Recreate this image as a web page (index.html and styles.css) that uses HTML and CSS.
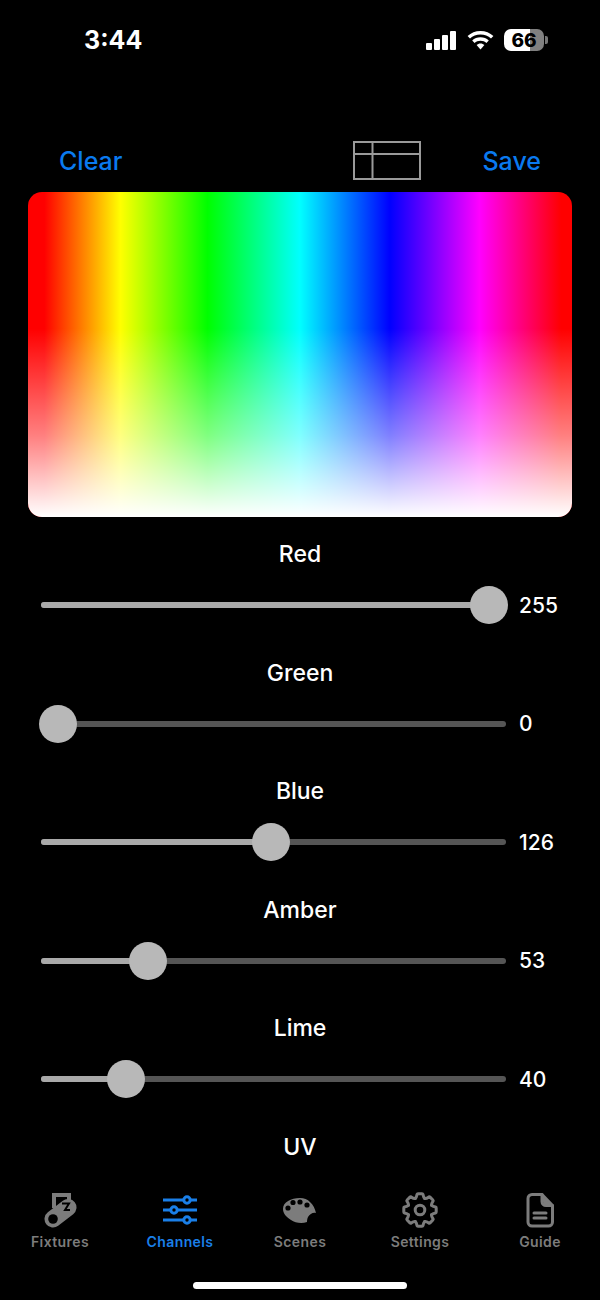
FILE: index.html
```html
<!DOCTYPE html>
<html lang="en">
<head>
  <meta charset="UTF-8">
  <title>Channels</title>
  <link rel="stylesheet" href="styles.css">
</head>
<body>
  <div class="app">
    <div class="status">
      <span class="time">3:44</span>
      <div class="status-icons">
        <svg class="signal" width="31" height="19" viewBox="0 0 31 19"><rect x="0" y="12" width="6" height="7" rx="1"/><rect x="8" y="8" width="6" height="11" rx="1"/><rect x="16" y="4" width="6" height="15" rx="1"/><rect x="24" y="0" width="6" height="19" rx="1"/></svg>
        <svg class="wifi" width="27" height="19" viewBox="0 0 27 19"><path d="M13.500 0C8.500 0 4 1.900.6 5l2.400 2.600C5.800 5.100 9.400 3.600 13.500 3.600s7.700 1.500 10.500 4L26.400 5C23 1.900 18.500 0 13.500 0z"/><path d="M13.500 6.200c-3.200 0-6.100 1.200-8.300 3.200l2.400 2.600c1.500-1.400 3.600-2.200 5.900-2.200s4.400.8 5.900 2.200l2.400-2.600c-2.200-2-5.100-3.200-8.300-3.200z"/><path d="M13.500 12.400c-1.500 0-2.900.6-3.900 1.500l3.900 4.600 3.900-4.600c-1-.9-2.400-1.500-3.900-1.500z"/></svg>
        <div class="battery">
          <div class="battery-body"><span>66</span></div>
          <div class="battery-tip"></div>
        </div>
      </div>
    </div>

    <div class="toolbar">
      <a class="action">Clear</a>
      <svg class="layout-icon" width="68" height="39" viewBox="0 0 68 39"><path d="M1 1h66v37H1zM1 13h66M19.500 1v37"/></svg>
      <a class="action">Save</a>
    </div>

    <div class="picker"><div class="picker-fade"></div></div>

    <div class="channels">
      <div class="channel">
        <div class="channel-name">Red</div>
        <div class="slider-row">
          <div class="slider" style="--v:255"><div class="fill"></div><div class="thumb"></div></div>
          <span class="value">255</span>
        </div>
      </div>
      <div class="channel">
        <div class="channel-name">Green</div>
        <div class="slider-row">
          <div class="slider" style="--v:0"><div class="fill"></div><div class="thumb"></div></div>
          <span class="value">0</span>
        </div>
      </div>
      <div class="channel">
        <div class="channel-name">Blue</div>
        <div class="slider-row">
          <div class="slider" style="--v:126"><div class="fill"></div><div class="thumb"></div></div>
          <span class="value">126</span>
        </div>
      </div>
      <div class="channel">
        <div class="channel-name">Amber</div>
        <div class="slider-row">
          <div class="slider" style="--v:53"><div class="fill"></div><div class="thumb"></div></div>
          <span class="value">53</span>
        </div>
      </div>
      <div class="channel">
        <div class="channel-name">Lime</div>
        <div class="slider-row">
          <div class="slider" style="--v:40"><div class="fill"></div><div class="thumb"></div></div>
          <span class="value">40</span>
        </div>
      </div>
      <div class="channel">
        <div class="channel-name">UV</div>
      </div>
    </div>

    <div class="tabs">
      <div class="tab">
        <svg width="36" height="36" viewBox="0 0 36 36">
          <path d="M10 1h19v12h-4V5H14v11h-4z"/>
          <path d="M11 27L26 15.500" fill="none" stroke="currentColor" stroke-width="17" stroke-linecap="round"/>
          <circle cx="11" cy="27" r="4.800" fill="#000"/>
          <path d="M20 11.500h7L23 18h5" fill="none" stroke="#000" stroke-width="2"/>
        </svg>
        <span>Fixtures</span>
      </div>
      <div class="tab active">
        <svg width="36" height="36" viewBox="0 0 36 36"><g fill="none" stroke="currentColor" stroke-width="3"><path d="M1 8h20.500M28.500 8H35M1 18h7.500M15.500 18H35M1 28h20.500M28.500 28H35"/><circle cx="25" cy="8" r="3.200"/><circle cx="12" cy="18" r="3.200"/><circle cx="25" cy="28" r="3.200"/></g></svg>
        <span>Channels</span>
      </div>
      <div class="tab">
        <svg width="36" height="36" viewBox="0 0 36 36"><path fill-rule="evenodd" d="M1 17C1 10 9 6 18 6c8 0 14 6 16 15-3-1-6 1-8 4-1 2-1 4-1 5-5 2-12 1-16-2-5-3-8-7-8-11zM8.600 16a2.600 2.600 0 1 0-5.200 0 2.600 2.600 0 0 0 5.200 0zM13.600 10.500a2.600 2.600 0 1 0-5.200 0 2.600 2.600 0 0 0 5.200 0zM20.600 10a2.600 2.600 0 1 0-5.200 0 2.600 2.600 0 0 0 5.200 0zM27.600 13a2.600 2.600 0 1 0-5.200 0 2.600 2.600 0 0 0 5.200 0z"/></svg>
        <span>Scenes</span>
      </div>
      <div class="tab">
        <svg width="36" height="36" viewBox="0 0 36 36">
          <defs><path id="gear-tooth" d="M13.200 6.500Q14.500 5.500 15 2.500Q15.200 1.800 16 1.800H20Q20.800 1.800 21 2.500Q21.500 5.500 22.800 6.500"/></defs>
          <g fill="none" stroke="currentColor" stroke-width="3" stroke-linecap="round">
            <use href="#gear-tooth"/>
            <use href="#gear-tooth" transform="rotate(45 18 18)"/>
            <use href="#gear-tooth" transform="rotate(90 18 18)"/>
            <use href="#gear-tooth" transform="rotate(135 18 18)"/>
            <use href="#gear-tooth" transform="rotate(180 18 18)"/>
            <use href="#gear-tooth" transform="rotate(225 18 18)"/>
            <use href="#gear-tooth" transform="rotate(270 18 18)"/>
            <use href="#gear-tooth" transform="rotate(315 18 18)"/>
            <circle cx="18" cy="18" r="4.800"/>
          </g>
        </svg>
        <span>Settings</span>
      </div>
      <div class="tab">
        <svg width="36" height="36" viewBox="0 0 36 36"><g fill="none" stroke="currentColor" stroke-width="3" stroke-linejoin="round" stroke-linecap="round"><path d="M10 2.500h10l10.500 11V30a4 4 0 0 1-4 4H10a4 4 0 0 1-4-4V6.500a4 4 0 0 1 4-4z"/><path d="M20 2.500v7a4 4 0 0 0 4 4h6.500M12 21h12M12 26h12"/></g><path d="M21 4l8 8.500h-5a3 3 0 0 1-3-3z"/></svg>
        <span>Guide</span>
      </div>
    </div>
    <div class="home-bar"><div class="home-indicator"></div></div>
  </div>
</body>
</html>
```

FILE: styles.css
```css
* { box-sizing: border-box; }
body { margin: 0; background: #000; color: #fff; font-family: Inter, "Liberation Sans", sans-serif; }

.app { width: 600px; height: 1300px; display: flex; flex-direction: column; overflow: hidden; background: #000; }

.status { height: 80px; padding: 0 52px 0 84px; display: flex; align-items: center; justify-content: space-between; flex: none; }
.time { font-size: 25px; font-weight: 700; }
.status-icons { display: flex; align-items: center; gap: 10px; }
.signal, .wifi { fill: #fff; }
.battery { display: flex; align-items: center; gap: 1px; }
.battery-body { width: 40px; height: 22px; border-radius: 7px; background: linear-gradient(90deg, #fff 66%, #808080 66%); color: #000; font-size: 19px; font-weight: 800; display: flex; align-items: center; justify-content: center; }
.battery-tip { width: 3px; height: 8px; border-radius: 0 2px 2px 0; background: #777; }

.toolbar { height: 112px; padding: 0 59px 12px; display: flex; align-items: flex-end; justify-content: space-between; flex: none; }
.action { color: #0a7af0; font-size: 25px; font-weight: 500; line-height: 38px; }
.layout-icon { fill: none; stroke: #9a9a9a; stroke-width: 2; margin-left: 170px; }

.picker { margin: 0 28px; height: 325px; border-radius: 14px; flex: none; overflow: hidden; background: linear-gradient(90deg, #f00 3%, #ff0 17%, #0f0 33%, #0ff 50%, #00f 66.500%, #f0f 83%, #f00 98%); }
.picker-fade { height: 100%; background: linear-gradient(180deg, rgba(255,255,255,0) 42%, rgba(255,255,255,.5) 75%, #fff 100%); }

.channels { flex: 1; padding-top: 20px; overflow: hidden; }
.channel { height: 118.500px; }
.channel-name { font-size: 23px; font-weight: 500; text-align: center; line-height: 34px; }
.slider-row { display: flex; align-items: center; height: 38px; margin-top: 15px; padding-left: 41px; }
.slider { position: relative; width: 465px; height: 6px; border-radius: 3px; background: #555; }
.fill { height: 100%; width: calc(17px + var(--v) / 255 * 431px); border-radius: 3px; background: #a9a9a9; }
.thumb { position: absolute; top: -16px; left: calc(-2px + var(--v) / 255 * 431px); width: 38px; height: 38px; border-radius: 50%; background: #b8b8b8; }
.value { margin-left: 13px; font-size: 21px; font-weight: 500; }

.tabs { height: 86px; display: grid; grid-template-columns: repeat(5, 120px); flex: none; }
.tab { display: flex; flex-direction: column; align-items: center; color: #7c7c7c; padding-top: 14px; }
.tab svg { fill: currentColor; flex: none; }
.tab span { font-size: 14px; font-weight: 600; letter-spacing: 0.4px; margin-top: 4px; line-height: 20px; }
.tab.active { color: #1a7fe8; }

.home-bar { height: 36px; flex: none; display: flex; justify-content: center; }
.home-indicator { width: 214px; height: 7px; border-radius: 4px; background: #fff; margin-top: 18px; }
```
